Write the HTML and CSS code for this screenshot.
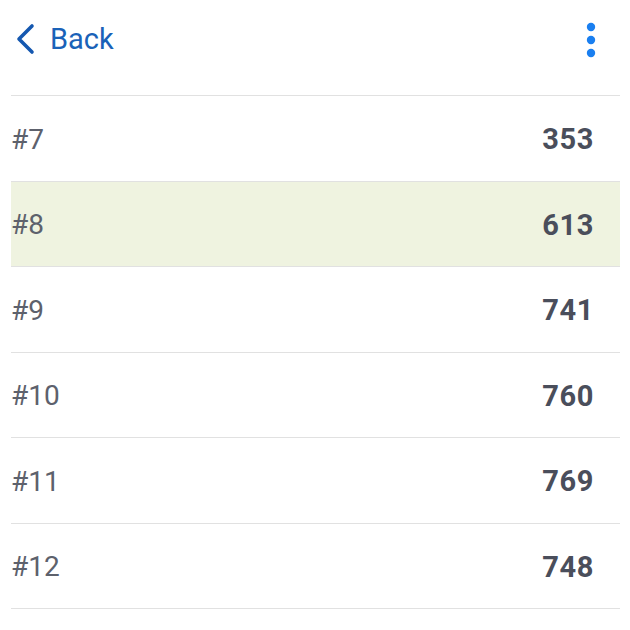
FILE: index.html
```html
<!DOCTYPE html>
<html>
<head>
<meta charset="utf-8">
<link rel="stylesheet" href="styles.css">
</head>
<body>
<div class="page">
  <header class="nav">
    <a class="back">
      <svg class="chev" width="22" height="32" viewBox="0 0 22 32"><path d="M18 3 L5 16 L18 29" fill="none" stroke="#1558b0" stroke-width="3.6" stroke-linecap="round" stroke-linejoin="round"/></svg>
      <span>Back</span>
    </a>
    <svg class="more" width="10" height="36" viewBox="0 0 10 36"><circle cx="5" cy="5" r="4.2" fill="#1a7ff0"/><circle cx="5" cy="18" r="4.2" fill="#1a7ff0"/><circle cx="5" cy="31" r="4.2" fill="#1a7ff0"/></svg>
  </header>
  <ul class="list">
    <li class="row"><span class="label">#7</span><span class="value">353</span></li>
    <li class="row hl"><span class="label">#8</span><span class="value">613</span></li>
    <li class="row"><span class="label">#9</span><span class="value">741</span></li>
    <li class="row"><span class="label">#10</span><span class="value">760</span></li>
    <li class="row"><span class="label">#11</span><span class="value">769</span></li>
    <li class="row"><span class="label">#12</span><span class="value">748</span></li>
  </ul>
</div>
</body>
</html>
```
FILE: styles.css
```css
html, body { margin: 0; padding: 0; background: #fff; }
body { font-family: Roboto, "Liberation Sans", sans-serif; }
.page { padding: 0 10px 0 11px; }
.nav {
  height: 96px;
  display: flex;
  align-items: flex-start;
  justify-content: space-between;
  border-bottom: 1px solid #e1e1e1;
  box-sizing: border-box;
}
.back {
  display: flex;
  align-items: center;
  gap: 14px;
  color: #1a62b8;
  font-size: 29px;
  margin-top: 23px;
  margin-left: 3px;
}
.back span { line-height: 32px; }
.more { margin-top: 22px; margin-right: 24px; }
.list { list-style: none; margin: 0; padding: 0; }
.row {
  height: 85.5px;
  box-sizing: border-box;
  border-bottom: 1px solid #e1e1e1;
  display: flex;
  align-items: center;
  justify-content: space-between;
  padding: 2px 26px 0 0;
}
.row.hl { background: #eff3e0; }
.label { color: #5d616c; font-size: 28px; font-weight: 400; }
.value { color: #4a4e5b; font-size: 29px; font-weight: 700; letter-spacing: 0.6px; font-family: Roboto, sans-serif; }
```
